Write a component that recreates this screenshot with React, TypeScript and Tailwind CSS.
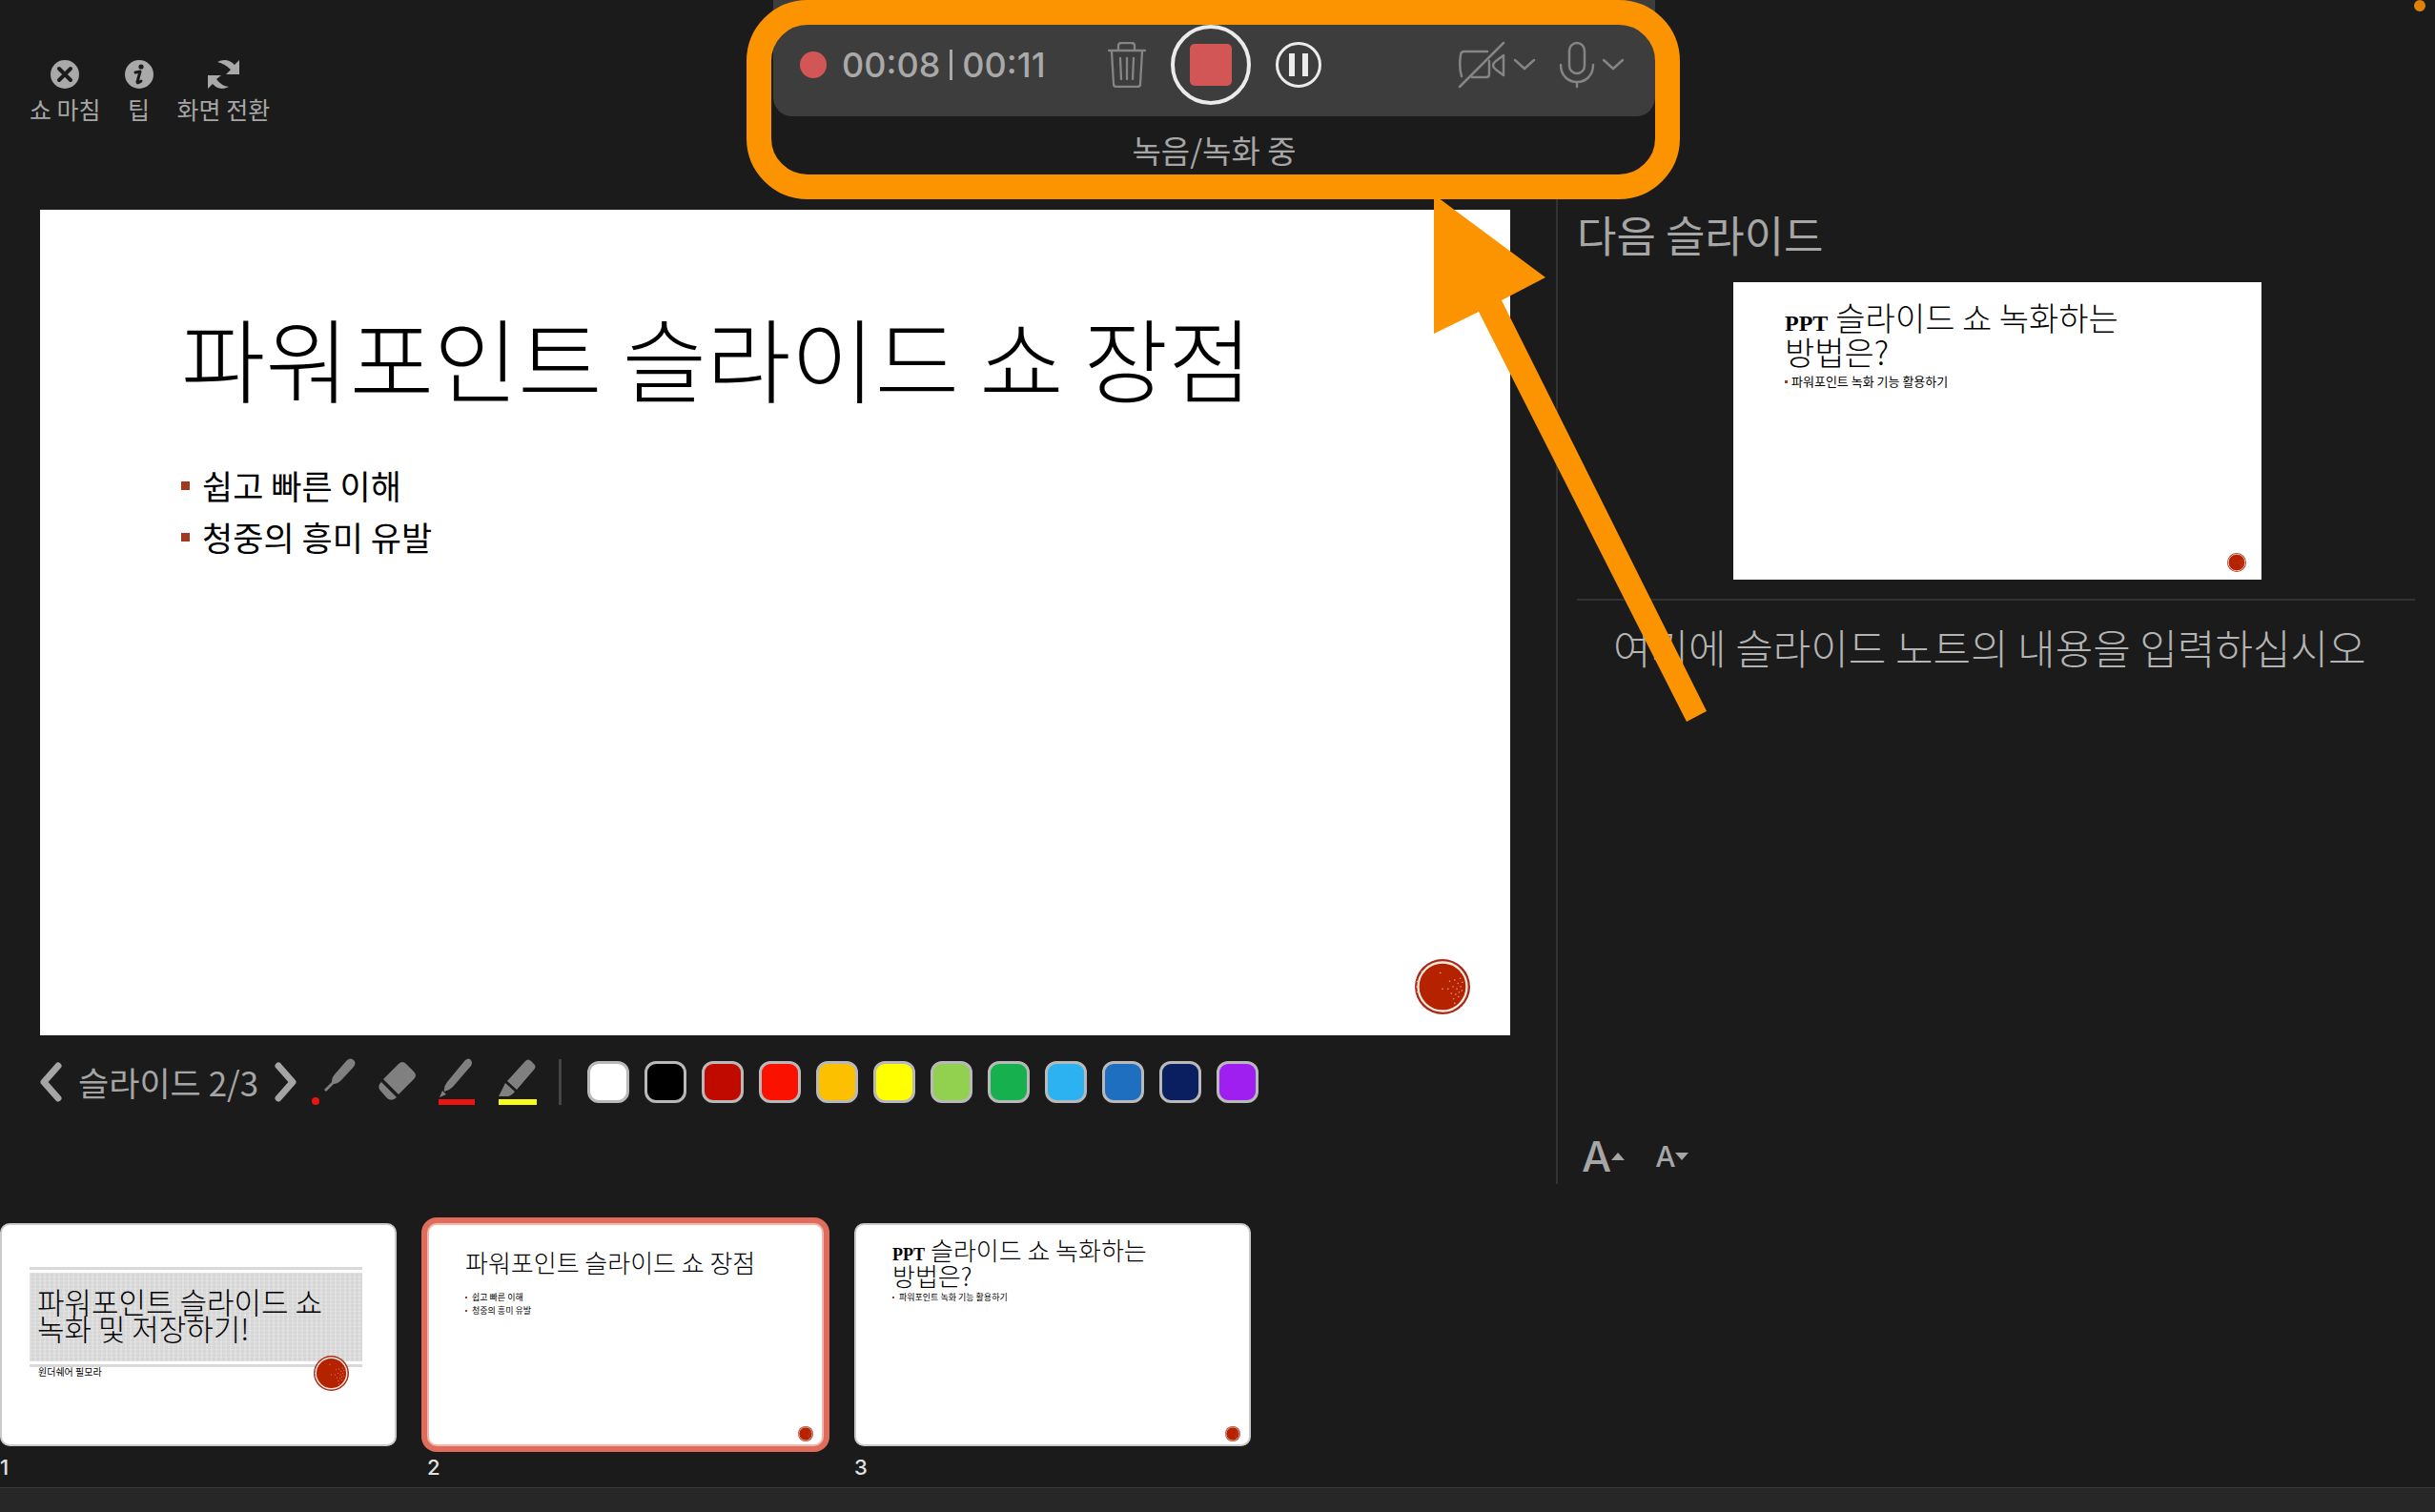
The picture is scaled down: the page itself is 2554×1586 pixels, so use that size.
import { useState } from "react"
import type { ReactNode } from "react"
import clsx from "clsx"

type SlideSize = "main" | "next" | "thumb"

interface SlideData {
  prefix?: string
  title: string[]
  bullets: string[]
}

const advantages: SlideData = {
  title: ["파워포인트 슬라이드 쇼 장점"],
  bullets: ["쉽고 빠른 이해", "청중의 흥미 유발"],
}

const howTo: SlideData = {
  prefix: "PPT",
  title: ["슬라이드 쇼 녹화하는", "방법은?"],
  bullets: ["파워포인트 녹화 기능 활용하기"],
}

const swatches = [
  { name: "흰색", color: "bg-white" },
  { name: "검정", color: "bg-black" },
  { name: "진한 빨강", color: "bg-[#c00a00]" },
  { name: "빨강", color: "bg-[#fb1100]" },
  { name: "주황", color: "bg-[#fcc000]" },
  { name: "노랑", color: "bg-[#ffff00]" },
  { name: "연한 녹색", color: "bg-[#92d14f]" },
  { name: "녹색", color: "bg-[#16b04f]" },
  { name: "연한 파랑", color: "bg-[#2cb1f1]" },
  { name: "파랑", color: "bg-[#1f6fc1]" },
  { name: "진한 파랑", color: "bg-[#0a1f60]" },
  { name: "자주", color: "bg-[#9f1ff0]" },
]

const slideStyles = {
  main: {
    body: "pt-[58px] pl-[148px]",
    title: "h-[192px] text-[96px] leading-[96px]",
    line: "gap-6",
    prefix: "text-[64px]",
    list: "mt-3 text-[35px] leading-[54px]",
    item: "gap-[13px]",
    dot: "size-[9px]",
    seal: "right-[42px] bottom-[22px] size-[58px]",
  },
  next: {
    body: "pt-[21px] pl-[54px]",
    title: "h-[68px] text-[34px] leading-[36px]",
    line: "gap-2",
    prefix: "text-[24px]",
    list: "mt-[5px] text-[13px] leading-[20px]",
    item: "gap-1",
    dot: "size-[3px]",
    seal: "right-4 bottom-2 size-5",
  },
  thumb: {
    body: "pt-[14px] pl-[38px]",
    title: "h-[50px] text-[26px] leading-[26px]",
    line: "gap-[6px]",
    prefix: "text-[18px]",
    list: "mt-[5px] text-[9px] leading-[14px]",
    item: "gap-[5px]",
    dot: "size-[2px]",
    seal: "right-[9px] bottom-[3px] size-4",
  },
}

const specks = [
  [72, 38], [78, 44], [83, 50], [76, 54], [69, 50], [80, 60], [85, 57], [74, 64], [66, 62], [79, 68], [70, 72], [86, 42], [63, 40], [60, 54], [72, 80], [46, 25], [50, 54], [82, 35],
]

function Seal({ className }: { className: string }) {
  return (
    <svg viewBox="0 0 100 100" className={className} aria-hidden="true">
      <circle cx="50" cy="50" r="50" fill="#a62a1c" />
      <circle cx="50" cy="50" r="44" fill="#b52200" stroke="#fdeadb" strokeWidth="4" />
      {specks.map(([cx, cy]) => (
        <circle key={`${cx}-${cy}`} cx={cx} cy={cy} r="1.4" fill="#e3a08c" />
      ))}
      <path d="M3 40l4 1M2 50h4M3 60l4-1M12 22l3 3" stroke="#e9c4bb" strokeWidth="2" />
    </svg>
  )
}

function Slide({ data, size }: { data: SlideData; size: SlideSize }) {
  const s = slideStyles[size]
  return (
    <div className={clsx("relative h-full w-full text-left text-black", s.body)}>
      <h2 className={clsx("flex flex-col justify-center font-light whitespace-nowrap", s.title)}>
        {data.title.map((line, index) => (
          <span key={line} className={clsx("flex items-baseline", s.line)}>
            {index === 0 && data.prefix && (
              <span className={clsx("font-['Liberation_Serif'] leading-none font-bold", s.prefix)}>{data.prefix}</span>
            )}
            <span>{line}</span>
          </span>
        ))}
      </h2>
      <ul className={s.list}>
        {data.bullets.map((bullet) => (
          <li key={bullet} className={clsx("flex items-center whitespace-nowrap", s.item)}>
            <span className={clsx("bg-[#a2391d]", s.dot)} />
            {bullet}
          </li>
        ))}
      </ul>
      <Seal className={clsx("absolute", s.seal)} />
    </div>
  )
}

function CoverSlide() {
  return (
    <div className="relative h-full w-full pt-11 text-left text-black">
      <div className="mr-[34px] ml-[29px] border-y-[3px] border-[#d9d9d9] py-[3px]">
        <div className="h-[93px] bg-[#d6d6d6] bg-[repeating-linear-gradient(90deg,#ffffff33_0_2px,transparent_2px_5px),repeating-linear-gradient(0deg,#ffffff2b_0_1px,transparent_1px_4px)] pt-4 pl-2">
          <h2 className="text-[31px] leading-[28px] font-light whitespace-nowrap">
            파워포인트 슬라이드 쇼
            <br />
            녹화 및 저장하기!
          </h2>
        </div>
      </div>
      <p className="pl-[38px] text-[10px] leading-[10px]">원더쉐어 필모라</p>
      <Seal className="absolute right-[48px] bottom-[56px] size-[37px]" />
    </div>
  )
}

function HeaderButton({ label, children }: { label: string; children: ReactNode }) {
  return (
    <button className="flex flex-col items-center gap-[2px]">
      <svg viewBox="0 0 36 32" className="h-8 w-9" aria-hidden="true">
        {children}
      </svg>
      <span className="text-[25px] leading-[36px]">{label}</span>
    </button>
  )
}

function Caret() {
  return (
    <svg viewBox="0 0 24 14" className="h-[14px] w-6" fill="none" stroke="#858585" strokeWidth="2.5" strokeLinecap="round" aria-hidden="true">
      <path d="M2 2l10 9L22 2" />
    </svg>
  )
}

function Recorder() {
  return (
    <section className="relative w-[925px]">
      <div className="flex h-[122px] items-center rounded-b-[20px] bg-[#3d3d3d] pt-[14px] pr-8 pl-7">
        <span className="size-7 rounded-full bg-[#d35656]" />
        <div className="ml-4 flex w-[279px] items-center gap-[10px] font-['Inter'] text-[36px] leading-10 font-medium text-[#a9a9a9]">
          <span>00:08</span>
          <span className="h-8 w-[3px] bg-[#a9a9a9]" />
          <span>00:11</span>
        </div>
        <button aria-label="삭제">
          <svg viewBox="0 0 40 48" className="h-12 w-10" fill="none" stroke="#858585" strokeWidth="2.3" strokeLinecap="round" strokeLinejoin="round">
            <path d="M1 9h38M11 8V4q0-3 3-3h11q3 0 3 3v4M4 10l2 34q0 3 3 3h22q3 0 3-3l2-34M13 17l1 22M20 17v22M27 17l-1 22" />
          </svg>
        </button>
        <button aria-label="중지" className="ml-[26px] flex size-[84px] items-center justify-center rounded-full border-4 border-[#ebebeb]">
          <span className="size-11 rounded-[5px] bg-[#d35656]" />
        </button>
        <button aria-label="일시 중지" className="ml-[26px] flex size-12 items-center justify-center gap-2 rounded-full border-[3px] border-[#ebebeb]">
          <span className="h-6 w-[6px] bg-[#ebebeb]" />
          <span className="h-6 w-[6px] bg-[#ebebeb]" />
        </button>
        <div className="ml-auto flex items-center gap-6">
          <button aria-label="카메라" className="flex items-center gap-2">
            <svg viewBox="0 0 50 50" className="size-[50px]" fill="none" stroke="#858585" strokeWidth="2.5" strokeLinecap="round" strokeLinejoin="round">
              <path d="M31 11H7q-4 0-4 4-2 12 1 22M15 38h15q3 0 3-3V21M2 48L48 2M48 15v21l-8-6q-6-4.500 0-9z" />
            </svg>
            <Caret />
          </button>
          <button aria-label="마이크" className="flex items-center gap-[7px]">
            <svg viewBox="0 0 38 50" className="h-[50px] w-[38px]" fill="none" stroke="#858585" strokeWidth="2.5" strokeLinecap="round">
              <rect x="11" y="2" width="16" height="32" rx="8" />
              <path d="M2 25C2 49 36 49 36 25M19 43v5" />
            </svg>
            <Caret />
          </button>
        </div>
      </div>
      <p className="mt-[11px] text-center text-[33px] leading-[48px] text-[#a6a6a6]">녹음/녹화 중</p>
      {/* highlight frame with its arrow */}
      <div className="pointer-events-none absolute top-0 -right-[26px] -left-7 h-[209px] rounded-[64px] border-[26px] border-[#fb9400]" />
      <svg viewBox="0 0 290 552" className="pointer-events-none absolute top-[207px] left-[693px] z-10 h-[552px] w-[290px]" aria-hidden="true">
        <path d="M0 0h4l113 84-46 24 215 431-21 11L47 120 0 143z" fill="#fb9400" />
      </svg>
    </section>
  )
}

function Toolbar() {
  const [active, setActive] = useState("빨강")
  return (
    <div className="mt-[17px] flex h-16 items-center text-[#a5a5a5]">
      <button aria-label="이전 슬라이드">
        <svg viewBox="0 0 24 42" className="h-[42px] w-6" fill="none" stroke="#a5a5a5" strokeWidth="7" strokeLinecap="round" strokeLinejoin="round">
          <path d="M19 4L4 21l15 17" />
        </svg>
      </button>
      <span className="mx-4 text-[35px] leading-[50px] whitespace-nowrap">슬라이드 2/3</span>
      <button aria-label="다음 슬라이드">
        <svg viewBox="0 0 24 42" className="h-[42px] w-6" fill="none" stroke="#a5a5a5" strokeWidth="7" strokeLinecap="round" strokeLinejoin="round">
          <path d="M5 4l15 17L5 38" />
        </svg>
      </button>
      <div className="ml-[15px] flex items-center gap-4">
        <button aria-label="레이저 포인터">
          <svg viewBox="0 0 48 50" className="h-[50px] w-12">
            <path d="M38 2q4-3 7 0t0 7L32 23q-4 4-8 4l-8 8-2-2 8-8q0-5 3-8z" fill="#808080" />
            <circle cx="5" cy="45" r="4" fill="#eb1410" />
          </svg>
        </button>
        <button aria-label="지우개">
          <svg viewBox="-3 0 48 50" className="h-[50px] w-12" fill="#808080">
            <path d="M25 6q4-4 8 0l8 8q4 4 0 8L25 38 9 22zM7 25l16 16q-5 5-10 1l-7-8q-4-5 1-9z" />
          </svg>
        </button>
        <button aria-label="펜">
          <svg viewBox="0 0 48 50" className="h-[50px] w-12">
            <path d="M34 2q4-3 6 0t0 6L21 30q-4 4-9 5-1-5 3-10zM10 34l4 4-7 3z" fill="#808080" />
            <path d="M6 43h38v6H6z" fill="#eb1410" />
          </svg>
        </button>
        <button aria-label="형광펜">
          <svg viewBox="0 0 48 50" className="h-[50px] w-12">
            <path d="M33 3q3-3 6 0l3 3q3 3 0 6L24 33l-10-9zM12 26l10 9q-4 5-8 5H5z" fill="#808080" />
            <path d="M5 43h40v6H5z" fill="#f8fb1c" />
          </svg>
        </button>
      </div>
      <span className="ml-5 h-12 w-[3px] bg-[#454545]" />
      <div className="ml-[27px] flex gap-4">
        {swatches.map((swatch) => (
          <button
            key={swatch.name}
            aria-label={swatch.name}
            aria-pressed={active === swatch.name}
            onClick={() => setActive(swatch.name)}
            className={clsx("size-11 rounded-xl border-[3px] border-[#b9b9b9]", swatch.color)}
          />
        ))}
      </div>
    </div>
  )
}

function Thumbnail({ number, selected, children }: { number: number; selected?: boolean; children: ReactNode }) {
  return (
    <div className="w-[416px]">
      <button
        className={clsx(
          "block h-[234px] w-full overflow-hidden rounded-[10px] border-2 bg-white",
          selected ? "border-[#f0b8ae] ring-[6px] ring-[#e06d5c]" : "border-[#cbcbcb]",
        )}
      >
        {children}
      </button>
      <p className="mt-[6px] font-['Inter'] text-[22px] leading-8 font-medium text-[#e2e2e2]">{number}</p>
    </div>
  )
}

export default function App() {
  const [notes, setNotes] = useState("여기에 슬라이드 노트의 내용을 입력하십시오")

  return (
    <div className="relative flex min-h-screen flex-col overflow-hidden bg-[#1b1b1b] font-['Noto_Sans_CJK_KR',sans-serif] text-[#a6a6a6]">
      <span className="absolute top-0 right-[10px] size-3 rounded-full bg-[#e0810a]" />
      <header className="grid h-[209px] grid-cols-[1fr_auto_1fr] pr-[7px]">
        <nav className="flex items-start gap-[22px] pt-[62px] pl-[31px]">
          <HeaderButton label="쇼 마침">
            <circle cx="18" cy="16" r="15" fill="#a9a9a9" />
            <path d="M12 10l12 12M24 10L12 22" stroke="#1b1b1b" strokeWidth="4" strokeLinecap="round" />
          </HeaderButton>
          <HeaderButton label="팁">
            <circle cx="18" cy="16" r="15" fill="#a9a9a9" />
            <circle cx="20" cy="8" r="2.600" fill="#1b1b1b" />
            <path d="M14 14l5-1-3 11q0 2 4-1" fill="none" stroke="#1b1b1b" strokeWidth="3" strokeLinecap="round" strokeLinejoin="round" />
          </HeaderButton>
          <HeaderButton label="화면 전환">
            <path d="M12 3q10-5 18 3l5-5v15H21l5-5q-6-6-14-8zM24 29q-10 5-17-3l-5 5V17h14l-5 4q5 7 13 8z" fill="#a9a9a9" />
          </HeaderButton>
        </nav>
        <Recorder />
      </header>

      <main className="grid h-[1033px] grid-cols-[1632fr_922fr]">
        <section className="pt-[11px] pr-12 pl-[42px]">
          <div className="aspect-[1542/866] w-full bg-white">
            <Slide data={advantages} size="main" />
          </div>
          <Toolbar />
        </section>

        <aside className="flex flex-col border-l-2 border-[#333333] pr-[21px] pl-5">
          <h1 className="pt-1 text-[45px] leading-[66px]">다음 슬라이드</h1>
          <div className="mt-[17px] ml-[164px] h-[312px] w-[554px] bg-white">
            <Slide data={howTo} size="next" />
          </div>
          <hr className="mt-5 border-t-2 border-[#333333]" />
          <textarea
            aria-label="슬라이드 노트"
            value={notes}
            onChange={(e) => setNotes(e.target.value)}
            className="mt-[18px] ml-[38px] flex-1 resize-none bg-transparent text-[43px] leading-[60px] font-light text-[#b4b4b4] outline-none"
          />
          <div className="flex h-[58px] items-center gap-8 pl-[5px] font-['Inter'] font-medium">
            <button aria-label="글꼴 크게" className="flex items-center">
              <span className="text-[44px] leading-[48px]">A</span>
              <svg viewBox="0 0 14 8" className="h-2 w-[14px]" fill="#a6a6a6">
                <path d="M0 8l7-8 7 8z" />
              </svg>
            </button>
            <button aria-label="글꼴 작게" className="flex items-center">
              <span className="text-[30px] leading-[48px]">A</span>
              <svg viewBox="0 0 14 8" className="h-2 w-[14px]" fill="#a6a6a6">
                <path d="M0 0l7 8 7-8z" />
              </svg>
            </button>
          </div>
        </aside>
      </main>

      <section className="flex gap-8 pt-[41px]">
        <Thumbnail number={1}>
          <CoverSlide />
        </Thumbnail>
        <Thumbnail number={2} selected>
          <Slide data={advantages} size="thumb" />
        </Thumbnail>
        <Thumbnail number={3}>
          <Slide data={howTo} size="thumb" />
        </Thumbnail>
      </section>

      <footer className="mt-auto h-[26px] border-t border-[#3a3a3a] bg-[#272727]" />
    </div>
  )
}
